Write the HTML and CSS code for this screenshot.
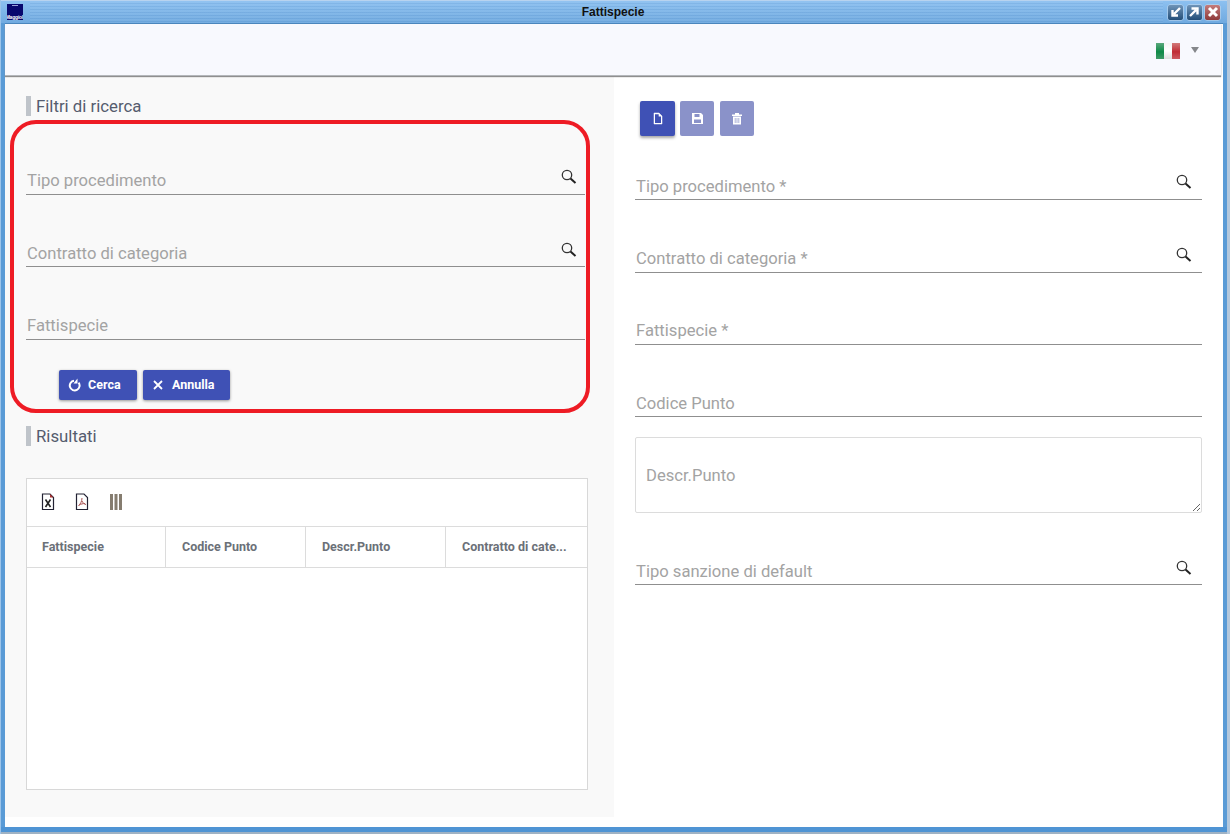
FILE: index.html
```html
<!DOCTYPE html>
<html lang="it">
<head>
<meta charset="utf-8">
<title>Fattispecie</title>
<link rel="stylesheet" href="styles.css">
</head>
<body>
<div class="window">
  <div class="titlebar">
    <div class="app-logo"><span class="app-logo-line"></span><span class="app-logo-text">Maggioli</span></div>
    <div class="title">Fattispecie</div>
    <div class="win-buttons">
      <span class="win-btn"><svg width="14" height="14" viewBox="0 0 14 14"><path d="M11 3 5 9M3.500 5v5.500H9" fill="none" stroke="#fff" stroke-width="2.400"/></svg></span>
      <span class="win-btn"><svg width="14" height="14" viewBox="0 0 14 14"><path d="M3 11 9 5M4.500 3.500H10.500V9.500" fill="none" stroke="#fff" stroke-width="2.400"/></svg></span>
      <span class="win-btn win-close"><svg width="14" height="14" viewBox="0 0 14 14"><path d="M3 3l8 8M11 3l-8 8" fill="none" stroke="#fff" stroke-width="3"/></svg></span>
    </div>
  </div>
  <div class="client">
    <header class="topbar">
      <div class="flag"><i class="flag-g"></i><i class="flag-w"></i><i class="flag-r"></i></div>
      <span class="caret"></span>
    </header>
    <div class="panes">
      <section class="left">
        <h2 class="section-title">Filtri di ricerca</h2>
        <div class="filters">
          <div class="field"><span class="label">Tipo procedimento</span><svg class="lens" width="18" height="18" viewBox="0 0 18 18"><circle cx="7" cy="7" r="4.700" fill="none" stroke="#333" stroke-width="1.300"/><path d="M10.500 10.500l5 4.500" stroke="#222" stroke-width="2"/></svg></div>
          <div class="field field-mid"><span class="label">Contratto di categoria</span><svg class="lens" width="18" height="18" viewBox="0 0 18 18"><circle cx="7" cy="7" r="4.700" fill="none" stroke="#333" stroke-width="1.300"/><path d="M10.500 10.500l5 4.500" stroke="#222" stroke-width="2"/></svg></div>
          <div class="field"><span class="label">Fattispecie</span></div>
          <div class="filter-actions">
            <button class="btn btn-search"><svg width="14" height="14" viewBox="0 0 14 14"><path d="M6 2.700A4.900 4.900 0 1 0 10.600 4.600" fill="none" stroke="#fff" stroke-width="2"/><path d="M9.500 0.500V5.500H5.500z" fill="#fff"/></svg>Cerca</button>
            <button class="btn btn-cancel"><svg width="12" height="12" viewBox="0 0 12 12"><path d="M2 2l8 8M10 2l-8 8" stroke="#fff" stroke-width="1.800"/></svg>Annulla</button>
          </div>
        </div>
        <h2 class="section-title results-title">Risultati</h2>
        <div class="table">
          <div class="table-tools">
            <svg width="16" height="18" viewBox="0 0 16 18"><path d="M2.500 1H10l3.500 3.500V16.500H2.500z" fill="#fff" stroke="#223" stroke-width="1.200"/><path d="M10 1v3.500h3.500z" fill="#a33"/><path d="M5.500 6.500l5 7.500M10.500 6.500l-5 7.500" stroke="#222" stroke-width="1.600"/></svg>
            <svg width="16" height="18" viewBox="0 0 16 18"><path d="M2.500 1H10l3.500 3.500V16.500H2.500z" fill="#fff" stroke="#223" stroke-width="1.200"/><path d="M8 5c0 4-2 6-3.500 8M8 8c1 2 2 3 4 3.500M5 12c2-1 4-1.500 6-1.500" fill="none" stroke="#a55" stroke-width="1"/></svg>
            <svg width="16" height="18" viewBox="0 0 16 18"><path d="M3.500 1v16M8 1v16M12.500 1v16" stroke="#857c6f" stroke-width="3"/></svg>
          </div>
          <div class="table-head">
            <div class="th">Fattispecie</div>
            <div class="th">Codice Punto</div>
            <div class="th">Descr.Punto</div>
            <div class="th th-last">Contratto di cate...</div>
          </div>
        </div>
      </section>
      <section class="right">
        <div class="actions">
          <button class="sq-btn"><svg width="12" height="13" viewBox="0 0 12 13"><path d="M2 1h5l3 3v8H2z" fill="#fff" stroke="#fff" stroke-width="0.500"/><path d="M3 2.200V11h6V4.500H6.700V2.200z" fill="#3f51b5"/></svg></button>
          <button class="sq-btn sq-off"><svg width="13" height="13" viewBox="0 0 13 13"><path d="M1 1h9l2 2v9H1z" fill="#fff"/><path d="M3.500 2h5v3h-5zM3 7.500h7V11H3z" fill="#8a92c9"/></svg></button>
          <button class="sq-btn sq-off"><svg width="12" height="13" viewBox="0 0 12 13"><path d="M1 2.500h10V4H1zM4 1h4v1.500H4zM2 4.500h8V12.500H2z" fill="#fff"/><path d="M4.200 6v5M6 6v5M7.800 6v5" stroke="#8a92c9" stroke-width="0.700"/></svg></button>
        </div>
        <div class="rfield rfield-first"><span class="label">Tipo procedimento *</span><svg class="lens" width="18" height="18" viewBox="0 0 18 18"><circle cx="7" cy="7" r="4.700" fill="none" stroke="#333" stroke-width="1.300"/><path d="M10.500 10.500l5 4.500" stroke="#222" stroke-width="2"/></svg></div>
        <div class="rfield rfield-second"><span class="label">Contratto di categoria *</span><svg class="lens" width="18" height="18" viewBox="0 0 18 18"><circle cx="7" cy="7" r="4.700" fill="none" stroke="#333" stroke-width="1.300"/><path d="M10.500 10.500l5 4.500" stroke="#222" stroke-width="2"/></svg></div>
        <div class="rfield"><span class="label">Fattispecie *</span></div>
        <div class="rfield rfield-code"><span class="label">Codice Punto</span></div>
        <textarea class="descr" placeholder="Descr.Punto"></textarea>
        <div class="rfield rfield-last"><span class="label">Tipo sanzione di default</span><svg class="lens" width="18" height="18" viewBox="0 0 18 18"><circle cx="7" cy="7" r="4.700" fill="none" stroke="#333" stroke-width="1.300"/><path d="M10.500 10.500l5 4.500" stroke="#222" stroke-width="2"/></svg></div>
      </section>
    </div>
  </div>
  <div class="bottom-edge"></div>
</div>
</body>
</html>
```

FILE: styles.css
```css
* { box-sizing: border-box; }
html, body { margin: 0; height: 100%; overflow: hidden; background: #fff; }
body { font-family: Roboto, "Liberation Sans", sans-serif; }
.window {
  width: 1230px; height: 834px; display: flex; flex-direction: column;
  background: #5a9bd6;
  border-left: 1px solid #9cc4ea; border-right: 3px solid #b4c8dc;
}
.titlebar {
  height: 23px; flex: none; display: flex; align-items: center; position: relative;
  border-top: 1px solid #b8d3ef;
  background: linear-gradient(#8cc0f0, #70aae0);
}
.titlebar::before {
  content: ""; position: absolute; left: 29px; right: 64px; top: 0; bottom: 0;
  background: repeating-linear-gradient(to bottom, rgba(255,255,255,.05) 0, rgba(255,255,255,.05) 2px, rgba(40,90,150,.08) 2px, rgba(40,90,150,.08) 3px);
}
.app-logo {
  width: 16px; height: 16px; margin-left: 6px; background: #08086e; display: flex; flex-direction: column;
  justify-content: space-between; align-items: center; overflow: hidden; position: relative;
}
.app-logo-line { width: 6px; height: 1px; background: #9aa0d8; margin-top: 1px; }
.app-logo-text { font: 700 5px/6px "Liberation Sans", sans-serif; color: #fff; letter-spacing: -0.200px; }
.title {
  position: absolute; left: 0; right: 2px; text-align: center; top: 4px;
  font: 700 12px/15px "Liberation Sans", sans-serif; color: #111;
}
.win-buttons { margin-left: auto; display: flex; gap: 3.500px; margin-right: 7px; position: relative; }
.win-btn {
  width: 15px; height: 15px; display: flex; align-items: center; justify-content: center;
  border-radius: 2px; background: linear-gradient(#6f94b8, #234e78); box-shadow: 0 0 0 0.500px #c8dbee;
}
.win-close { background: linear-gradient(#c47c7c, #8e3a3a); }
.client {
  flex: 1; min-height: 0; margin: 0 4px; background: #fff; display: flex; flex-direction: column;
  border-top: 1px solid #4a86bd;
}
.topbar {
  height: 52px; flex: none; margin-right: 2px; background: #f8f9fe; display: flex; align-items: center; justify-content: flex-end;
  padding: 0 22px 0 0; border-bottom: 1px solid #b4b7bb; box-shadow: 0 1px 1px #8f8f8f; position: relative; z-index: 1;
}
.flag { width: 24px; height: 16px; display: flex; margin-top: 3px; margin-right: 11px; filter: blur(0.300px); }
.flag i { flex: 1; display: block; }
.flag-g { background: linear-gradient(#5aa87c, #0e8a47 55%, #3f9a66); }
.flag-w { background: linear-gradient(#f5f5f5, #fff 50%, #dedede); }
.flag-r { background: linear-gradient(#d27a7a, #c02c35 55%, #cc5a60); }
.caret { width: 0; height: 0; border-left: 4px solid transparent; border-right: 4px solid transparent; border-top: 6px solid #85878b; }
.panes { flex: 1; min-height: 0; display: flex; }
.left {
  width: 609px; height: 741px; flex: none; background: #f9f9f9; padding: 20px 25px 0 21px; position: relative;
}
.section-title {
  margin: 0; height: 20px; border-left: 5px solid #bfc4ca; padding-left: 5px;
  font: 400 16.800px/21px Roboto, sans-serif; color: #555c6e;
}
.filters {
  position: relative; height: 290px; margin: 6px 0 0 0;
}
.filters::before {
  content: ""; position: absolute; box-sizing: border-box; left: -16px; top: -2px; width: 580px; height: 293px;
  border: 4px solid #ee1c25; border-radius: 26px; pointer-events: none;
}
.field, .rfield {
  position: relative; height: 73px; border-bottom: 1px solid #8f8f8f; display: flex; align-items: flex-end;
}
.field { width: 559px; }
.filters .field:first-child { height: 73px; }
.filters .field-mid { height: 72px; }
.label { font-size: 16.600px; line-height: 20px; color: #a3a3a3; padding: 0 0 3px 1px; }
.field-mid .label, .rfield-first .label, .rfield-code .label { padding-bottom: 2px; }
.lens { position: absolute; }
.field .lens { bottom: 7px; right: 7px; }
.filters .field:first-child .lens { bottom: 8px; }
.rfield .lens { bottom: 8px; right: 9px; }
.filter-actions { display: flex; gap: 6px; padding: 30px 0 0 33px; }
.btn {
  height: 30px; border: 0; border-radius: 2px; background: #3f51b5; color: #fff;
  font: 700 12.500px/30px Roboto, sans-serif; display: flex; align-items: center; padding: 0;
  box-shadow: 0 1px 3px rgba(0,0,0,.4);
}
.btn-search { width: 78px; padding-left: 9px; gap: 6px; }
.btn-cancel { width: 87px; padding-left: 9px; gap: 8px; }
.results-title { margin-top: 14px; }
.table {
  width: 562px; height: 312px; margin-top: 32px; background: #fff; border: 1px solid #d8d8d8;
}
.table-tools { height: 48px; display: flex; align-items: center; gap: 18px; padding: 0 0 2px 13px; border-bottom: 1px solid #dcdcdc; }
.table-head { height: 41px; display: flex; border-bottom: 1px solid #dcdcdc; }
.th {
  width: 140px; font: 700 12.500px/40px Roboto, sans-serif; color: #6b7078; padding-left: 16px; border-right: 1px solid #dcdcdc; white-space: nowrap;
}
.th:first-child { width: 139px; padding-left: 15px; }
.th-last { width: 141px; border-right: 0; }
.right { flex: 1; min-width: 0; padding: 25px 0 0 21px; background: #fff; }
.actions { display: flex; gap: 5px; padding-left: 5px; height: 35px; }
.sq-btn {
  width: 35px; height: 35px; border: 0; padding: 0; border-radius: 2px; background: #3f51b5;
  display: flex; align-items: center; justify-content: center; box-shadow: 0 2px 3px rgba(0,0,0,.35);
}
.sq-off { width: 34px; background: #8a92c9; box-shadow: none; }
.sq-off + .sq-off { margin-left: 1px; }
.rfield { width: 567px; height: 72px; }
.rfield-first { height: 64px; }
.rfield-second { height: 73px; }
.descr {
  display: block; width: 567px; height: 76px; margin-top: 20px; border: 1px solid #dcdcdc; border-radius: 2px;
  background: #fff; padding: 28px 10px 0; font: 400 16.600px/20px Roboto, sans-serif; resize: both; outline: 0;
}
.descr::placeholder { color: #a3a3a3; opacity: 1; }
.rfield-last { height: 72px; }
.rfield-last .label { padding-bottom: 2px; }
.rfield-last .lens { bottom: 7px; }
.bottom-edge { height: 7px; flex: none; background: linear-gradient(#4f94d4 0, #4f94d4 5px, #9fb2c4 5px); }
```
